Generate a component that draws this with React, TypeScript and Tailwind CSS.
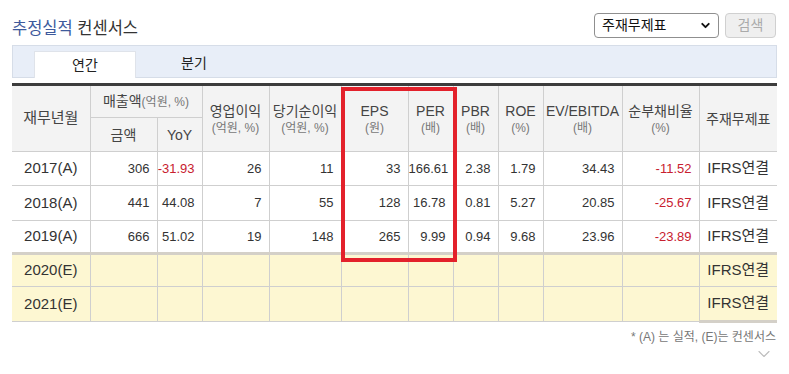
import { ChevronDown } from "lucide-react";

const font = "font-['Liberation_Sans','Noto_Sans_CJK_KR',sans-serif]";

interface Row {
  year: string;
  sales?: string;
  yoy?: string;
  op?: string;
  net?: string;
  eps?: string;
  per?: string;
  pbr?: string;
  roe?: string;
  ev?: string;
  debt?: string;
  est?: boolean;
  h: string;
}

const rows: Row[] = [
  { year: "2017(A)", sales: "306", yoy: "-31.93", op: "26", net: "11", eps: "33", per: "166.61", pbr: "2.38", roe: "1.79", ev: "34.43", debt: "-11.52", h: "h-[34px]" },
  { year: "2018(A)", sales: "441", yoy: "44.08", op: "7", net: "55", eps: "128", per: "16.78", pbr: "0.81", roe: "5.27", ev: "20.85", debt: "-25.67", h: "h-[35px]" },
  { year: "2019(A)", sales: "666", yoy: "51.02", op: "19", net: "148", eps: "265", per: "9.99", pbr: "0.94", roe: "9.68", ev: "23.96", debt: "-23.89", h: "h-[33px]" },
  { year: "2020(E)", est: true, h: "h-[33px]" },
  { year: "2021(E)", est: true, h: "h-[35px]" },
];

const neg = (v?: string) => (v && v.startsWith("-") ? "text-[#c8202f]" : "text-[#333]");

export default function App() {
  const th = "border-l border-[#cfcfcf] text-center font-normal text-[#444] leading-[16px]";
  const td = "border-l border-b border-[#cfcfcf] text-right pr-[7px] text-[13px]";
  return (
    <div className={`w-[789px] h-[374px] bg-white ${font}`}>
      <div className="w-[765px] ml-[12px] pt-[13px]">
        {/* title row */}
        <div className="flex items-center justify-between h-[25px]">
          <h2 className="text-[16.5px] leading-none text-[#333] pt-[6px]">
            <span className="text-[#3e5a9c]">추정실적</span> 컨센서스
          </h2>
          <div className="flex items-center gap-[6px] mr-[1px]">
            <div className="w-[125px] h-[25px] border border-[#8f8f8f] rounded-[4px] flex items-center justify-between pl-[7px] pr-[6px] text-[14px] text-[#111]">
              <span>주재무제표</span>
              <ChevronDown className="w-[13px] h-[13px]" strokeWidth={3.5} />
            </div>
            <div className="w-[51px] h-[25px] border border-[#d0d0d0] bg-[#efefef] rounded-[4px] flex items-center justify-center text-[14px] text-[#aaa]">
              검색
            </div>
          </div>
        </div>

        {/* tabs */}
        <div className="mt-[7px] h-[33px] bg-[#e8eef8] border border-[#d6dde8] flex items-end pl-[21px]">
          <div className="w-[102px] h-[27px] bg-white border-l border-t border-r border-[#dfe3ea] flex items-center justify-center text-[14px] text-[#222] -mb-px">
            연간
          </div>
          <div className="w-[116px] h-[27px] flex items-center justify-center text-[14px] text-[#222]">분기</div>
        </div>

        {/* table */}
        <div className="relative mt-[5px]">
          <table className="w-[765px] table-fixed border-collapse border-t-[3px] border-t-[#3c3c3c]">
            <colgroup>
              <col className="w-[78px]" />
              <col className="w-[67px]" />
              <col className="w-[45px]" />
              <col className="w-[67px]" />
              <col className="w-[72px]" />
              <col className="w-[67px]" />
              <col className="w-[45px]" />
              <col className="w-[45px]" />
              <col className="w-[45px]" />
              <col className="w-[79px]" />
              <col className="w-[77px]" />
              <col className="w-[78px]" />
            </colgroup>
            <thead className="bg-[#f3f3f3]">
              <tr className="h-[33px]">
                <th rowSpan={2} className="text-center font-normal text-[15px] text-[#444] border-b border-[#cfcfcf]">재무년월</th>
                <th colSpan={2} className={`${th} border-b text-[14px]`}>
                  매출액<span className="text-[12px] text-[#777]">(억원, %)</span>
                </th>
                {[
                  ["영업이익", "(억원, %)"],
                  ["당기순이익", "(억원, %)"],
                  ["EPS", "(원)"],
                  ["PER", "(배)"],
                  ["PBR", "(배)"],
                  ["ROE", "(%)"],
                  ["EV/EBITDA", "(배)"],
                  ["순부채비율", "(%)"],
                ].map(([a, b]) => (
                  <th key={a} rowSpan={2} className={`${th} border-b pt-[2px]`}>
                    <div className="text-[14px] text-[#444]">{a}</div>
                    <div className="text-[12px] text-[#777] mt-[1px]">{b}</div>
                  </th>
                ))}
                <th rowSpan={2} className={`${th} border-b text-[14px]`}>주재무제표</th>
              </tr>
              <tr className="h-[34px]">
                <th className={`${th} border-b text-[14px]`}>금액</th>
                <th className={`${th} border-b text-[14px]`}>YoY</th>
              </tr>
            </thead>
            <tbody>
              {rows.map((r, i) => (
                <tr
                  key={r.year}
                  className={`${r.h} ${r.est ? "bg-[#fdf7d2]" : "bg-white"} ${i === 3 ? "border-t-[3px] border-t-[#d4d0c8]" : ""}`}
                >
                  <td className="text-center text-[15px] text-[#333] border-b border-[#cfcfcf]">{r.year}</td>
                  <td className={`${td} text-[#333]`}>{r.sales}</td>
                  <td className={`${td} ${neg(r.yoy)}`}>{r.yoy}</td>
                  <td className={`${td} text-[#333]`}>{r.op}</td>
                  <td className={`${td} text-[#333]`}>{r.net}</td>
                  <td className={`${td} text-[#333]`}>{r.eps}</td>
                  <td className={`${td} text-[#333]`}>{r.per}</td>
                  <td className={`${td} text-[#333]`}>{r.pbr}</td>
                  <td className={`${td} text-[#333]`}>{r.roe}</td>
                  <td className={`${td} text-[#333]`}>{r.ev}</td>
                  <td className={`${td} ${neg(r.debt)}`}>{r.debt}</td>
                  <td className={`border-l border-b border-[#cfcfcf] text-center text-[15px] text-[#333] ${i === 4 ? "border-b-[3px] border-b-[#d4d0c8]" : ""}`}>
                    IFRS연결
                  </td>
                </tr>
              ))}
            </tbody>
          </table>
          <div className="absolute left-[329px] top-[4px] w-[116px] h-[175px] border-[4px] border-[#e3212b] pointer-events-none" />
        </div>

        <p className="text-right text-[12px] text-[#777] mt-[5px] pr-[1px]">* (A) 는 실적, (E)는 컨센서스</p>
        <div className="flex justify-end pr-[1px] -mt-[2px]">
          <ChevronDown className="w-[24px] h-[20px] text-[#bdbdbd]" strokeWidth={1.3} />
        </div>
      </div>
    </div>
  );
}
